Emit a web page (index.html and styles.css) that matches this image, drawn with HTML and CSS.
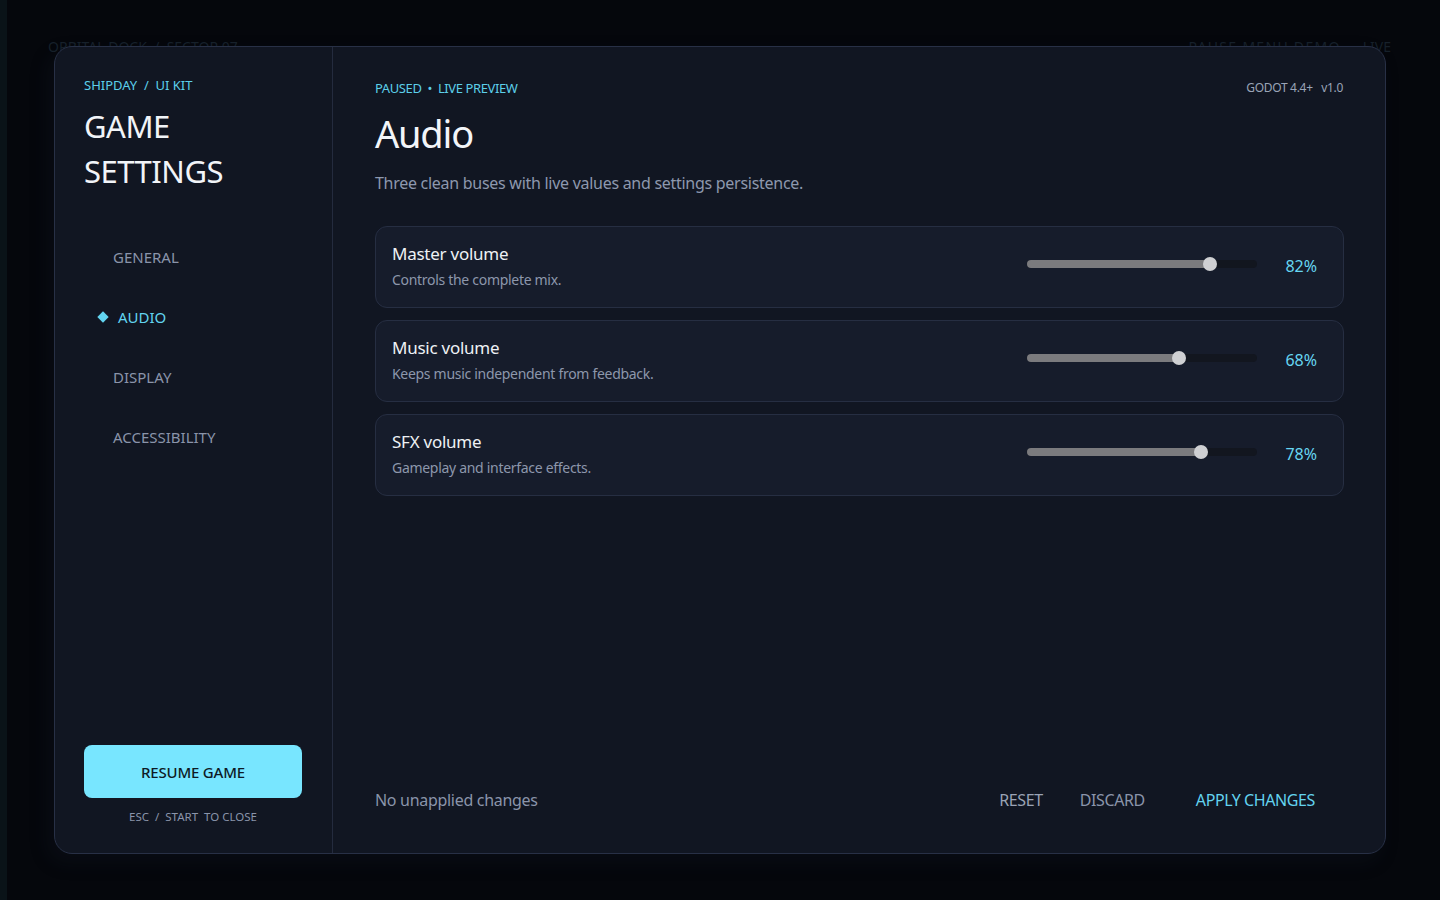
FILE: index.html
```html
<!DOCTYPE html>
<html lang="en">
<head>
<meta charset="utf-8">
<title>Game Settings</title>
<link rel="stylesheet" href="styles.css">
</head>
<body>
<div class="stage">
  <div class="backdrop">
    <span>ORBITAL DOCK  /  SECTOR 07</span>
    <span class="bd-right"><span class="bd-wide">PAUSE MENU DEMO</span><span>LIVE</span></span>
  </div>
  <div class="panel">
    <aside class="sidebar">
      <div class="brand">SHIPDAY  /  UI KIT</div>
      <h1 class="title">GAME<br>SETTINGS</h1>
      <nav class="nav">
        <div class="nav-item">GENERAL</div>
        <div class="nav-item active"><span class="diamond"></span>AUDIO</div>
        <div class="nav-item">DISPLAY</div>
        <div class="nav-item">ACCESSIBILITY</div>
      </nav>
      <div class="side-bottom">
        <button class="resume">RESUME GAME</button>
        <div class="hint">ESC  /  START  TO CLOSE</div>
      </div>
    </aside>
    <main class="main">
      <div class="head-row">
        <div class="eyebrow">PAUSED  •  LIVE PREVIEW</div>
        <div class="version">GODOT 4.4+   v1.0</div>
      </div>
      <h2 class="page-title">Audio</h2>
      <p class="subtitle">Three clean buses with live values and settings persistence.</p>
      <div class="cards">
        <div class="card">
          <div class="card-text">
            <div class="card-title">Master volume</div>
            <div class="card-desc">Controls the complete mix.</div>
          </div>
          <div class="slider">
            <div class="track"><div class="fill" style="width:183px"><span class="thumb"></span></div></div>
            <div class="value">82%</div>
          </div>
        </div>
        <div class="card">
          <div class="card-text">
            <div class="card-title">Music volume</div>
            <div class="card-desc">Keeps music independent from feedback.</div>
          </div>
          <div class="slider">
            <div class="track"><div class="fill" style="width:152px"><span class="thumb"></span></div></div>
            <div class="value">68%</div>
          </div>
        </div>
        <div class="card">
          <div class="card-text">
            <div class="card-title">SFX volume</div>
            <div class="card-desc">Gameplay and interface effects.</div>
          </div>
          <div class="slider">
            <div class="track"><div class="fill" style="width:174px"><span class="thumb"></span></div></div>
            <div class="value">78%</div>
          </div>
        </div>
      </div>
      <div class="footer">
        <div class="status">No unapplied changes</div>
        <div class="actions">
          <button class="act reset">RESET</button>
          <button class="act discard">DISCARD</button>
          <button class="act apply">APPLY CHANGES</button>
        </div>
      </div>
    </main>
  </div>
</div>
</body>
</html>
```

FILE: styles.css
```css
* { box-sizing: border-box; }
html, body {
  margin: 0;
  padding: 0;
  width: 1440px;
  height: 900px;
  overflow: hidden;
  background: #05070c;
  font-family: "Noto Sans", "Open Sans", sans-serif;
}
.stage {
  display: grid;
  height: 900px;
  border-left: 7px solid #0a1318;
}
.backdrop {
  grid-area: 1 / 1;
  align-self: start;
  display: flex;
  justify-content: space-between;
  padding: 37px 49px 0 41px;
  font-size: 14px;
  line-height: 20px;
  color: #17212b;
  white-space: pre;
}
.bd-right {
  display: flex;
  gap: 22px;
}
.bd-wide {
  letter-spacing: 1.3px;
}
.panel {
  grid-area: 1 / 1;
  margin: 46px 54px 46px 47px;
  display: flex;
  background: #111622;
  border: 1px solid #283046;
  border-radius: 18px;
  box-shadow: -6px 8px 18px rgba(20, 28, 44, 0.25);
  overflow: hidden;
}
.sidebar {
  width: 278px;
  flex: none;
  border-right: 1px solid #242b3e;
  padding: 28px 30px 26px 29px;
  display: flex;
  flex-direction: column;
}
.brand {
  font-size: 13px;
  line-height: 20px;
  color: #5ccfea;
  white-space: pre;
}
.title {
  margin: 8.5px 0 0;
  font-size: 31px;
  line-height: 45px;
  font-weight: 400;
  letter-spacing: -0.5px;
  color: #f1f4f8;
}
.nav {
  margin-top: 33.5px;
  display: flex;
  flex-direction: column;
}
.nav-item {
  display: flex;
  align-items: center;
  padding: 20px 0 20px 29px;
  font-size: 15px;
  line-height: 20px;
  color: #8a94aa;
}
.nav-item.active {
  padding-left: 13px;
  color: #62d4f0;
}
.diamond {
  width: 8px;
  height: 8px;
  margin: 0 11px 0 2px;
  background: #62d4f0;
  transform: rotate(45deg);
}
.side-bottom {
  margin-top: auto;
  display: flex;
  flex-direction: column;
}
.resume {
  height: 53px;
  border: none;
  border-radius: 8px;
  background: #78e6ff;
  color: #0e1a25;
  font-family: inherit;
  font-size: 15px;
  font-weight: 500;
  letter-spacing: -0.2px;
  padding: 0;
}
.hint {
  margin-top: 9px;
  text-align: center;
  font-size: 11.5px;
  line-height: 20px;
  color: #8a94aa;
  white-space: pre;
}
.main {
  flex: 1;
  padding: 31px 41px 41px 42px;
  display: flex;
  flex-direction: column;
}
.head-row {
  display: flex;
  justify-content: space-between;
  align-items: center;
  line-height: 20px;
}
.eyebrow {
  font-size: 13px;
  letter-spacing: -0.4px;
  color: #5ccfea;
  white-space: pre;
}
.version {
  font-size: 12px;
  letter-spacing: -0.3px;
  color: #9aa4b7;
  white-space: pre;
  margin-right: 1px;
}
.page-title {
  margin: 12px 0 0;
  font-size: 38px;
  line-height: 46px;
  font-weight: 400;
  letter-spacing: -1.2px;
  color: #f3f5f9;
}
.subtitle {
  margin: 15px 0 0;
  font-size: 16px;
  line-height: 24px;
  letter-spacing: -0.28px;
  color: #8d98ae;
}
.cards {
  margin-top: 31px;
  display: flex;
  flex-direction: column;
  gap: 12px;
}
.card {
  display: flex;
  align-items: center;
  height: 82px;
  padding: 14px 26px 17px 16px;
  background: #161c2b;
  border: 1px solid #262e42;
  border-radius: 12px;
}
.card-text {
  flex: 1;
  display: flex;
  flex-direction: column;
  gap: 4px;
}
.card-title {
  font-size: 17px;
  line-height: 24px;
  letter-spacing: -0.25px;
  color: #eef1f5;
}
.card-desc {
  font-size: 14px;
  line-height: 20px;
  letter-spacing: -0.3px;
  color: #8d97ab;
}
.slider {
  display: flex;
  align-items: center;
  margin-bottom: 4px;
}
.track {
  position: relative;
  width: 230px;
  height: 8px;
  border-radius: 4px;
  background: #12161f;
}
.fill {
  position: relative;
  height: 100%;
  border-radius: 4px;
  background: #7b7b7e;
}
.thumb {
  position: absolute;
  right: -7px;
  top: -3px;
  width: 14px;
  height: 14px;
  border-radius: 50%;
  background: #cfd0d3;
}
.value {
  width: 60px;
  text-align: right;
  font-size: 16px;
  line-height: 24px;
  color: #66d6f2;
  margin-top: 4px;
}
.footer {
  margin-top: auto;
  display: flex;
  align-items: center;
  justify-content: space-between;
  line-height: 24px;
}
.status {
  font-size: 16px;
  color: #8a94aa;
  letter-spacing: -0.3px;
}
.actions {
  display: flex;
  gap: 37px;
  margin-right: 29px;
}
.act {
  border: none;
  background: none;
  padding: 0;
  font-family: inherit;
  font-size: 16px;
  line-height: 24px;
  letter-spacing: -0.4px;
}
.reset { color: #9aa3b5; }
.discard { color: #8a94aa; }
.apply { color: #63d3ef; margin-left: 14px; }
```
